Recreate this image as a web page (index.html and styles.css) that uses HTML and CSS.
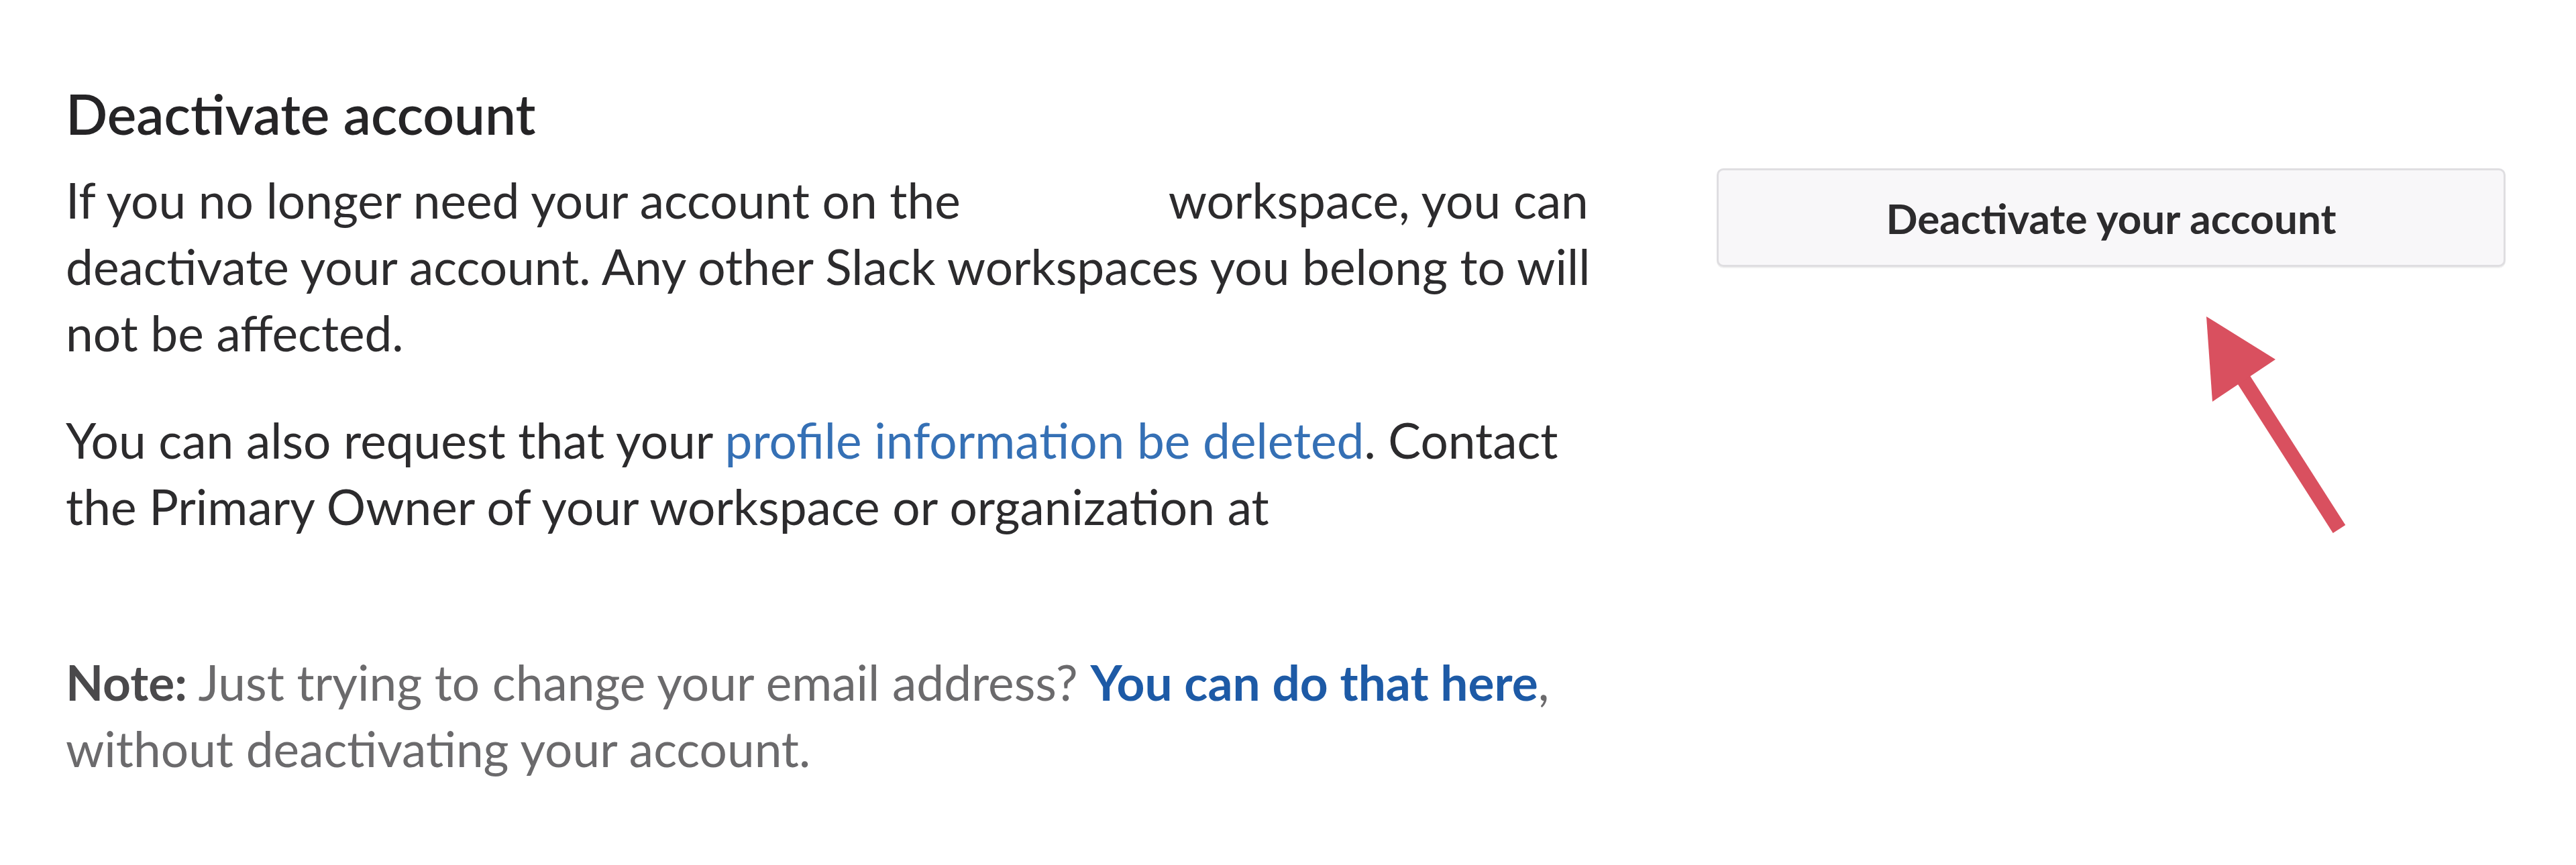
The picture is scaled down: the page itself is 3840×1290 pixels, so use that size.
FILE: index.html
```html
<!DOCTYPE html>
<html lang="en">
<head>
<meta charset="utf-8">
<title>Deactivate account</title>
<link rel="stylesheet" href="styles.css">
</head>
<body>
<main class="page">
  <h2 class="title">Deactivate account</h2>
  <div class="row">
    <div class="text-col">
      <p class="para">If you no longer need your account on the <span class="redact redact-ws"></span> workspace, you can<br>deactivate your account. Any other Slack workspaces you belong to will<br>not be affected.</p>
      <p class="para para-contact">You can also request that your <a class="link" href="#">profile information be deleted</a>. Contact<br>the Primary Owner of your workspace or organization at<br><span class="redact redact-mail"></span></p>
      <p class="para note"><strong class="note-label">Note:</strong> Just trying to change your email address? <a class="link link-bold" href="#">You can do that here</a>,<br>without deactivating your account.</p>
    </div>
    <div class="action-col">
      <button class="btn" type="button">Deactivate your account</button>
      <svg class="arrow" width="230" height="340" viewBox="0 0 230 340" aria-hidden="true">
        <line x1="62" y1="98" x2="207" y2="325" stroke="#d9505f" stroke-width="22"/>
        <polygon points="9,8 112,72 18,135" fill="#d9505f"/>
      </svg>
    </div>
  </div>
</main>
</body>
</html>
```

FILE: styles.css
```css
html, body {
  margin: 0;
  padding: 0;
  background: #ffffff;
}

body {
  font-family: Lato, "Liberation Sans", sans-serif;
  color: #2c2b2d;
  width: 3840px;
  height: 1290px;
  overflow: hidden;
}

.page {
  padding: 120px 105px 0 98px;
}

.title {
  margin: 0 0 31px 0;
  font-size: 82px;
  font-weight: 600;
  line-height: normal;
  color: #252426;
}

.row {
  display: flex;
  align-items: flex-start;
  gap: 161px;
}

.text-col {
  width: 2300px;
  flex: none;
}

.para {
  margin: 0 0 61px 0;
  font-size: 73px;
  line-height: 99px;
  white-space: nowrap;
}

.para-contact {
  margin-bottom: 64px;
}

.redact {
  display: inline-block;
  height: 1em;
  vertical-align: middle;
}

.redact-ws {
  width: 274px;
}

.redact-mail {
  width: 400px;
}

.link {
  color: #3570b5;
  text-decoration: none;
}

.link-bold {
  font-weight: 700;
  color: #1d5aa6;
}

.note {
  color: #6b6a6c;
}

.note-label {
  font-weight: 700;
  color: #4a494b;
}

.action-col {
  position: relative;
  flex: none;
  width: 1176px;
}

.btn {
  display: block;
  width: 100%;
  height: 147px;
  margin: 2px 0 0 0;
  padding: 0;
  background: #f8f7f9;
  border: 3px solid #dfdee1;
  border-radius: 10px;
  box-shadow: 0 2px 0 rgba(0, 0, 0, 0.06);
  font-family: Lato, "Liberation Sans", sans-serif;
  font-size: 62px;
  font-weight: 700;
  color: #2c2b2d;
  cursor: pointer;
}

.arrow {
  position: absolute;
  left: 721px;
  top: 215px;
}
```
